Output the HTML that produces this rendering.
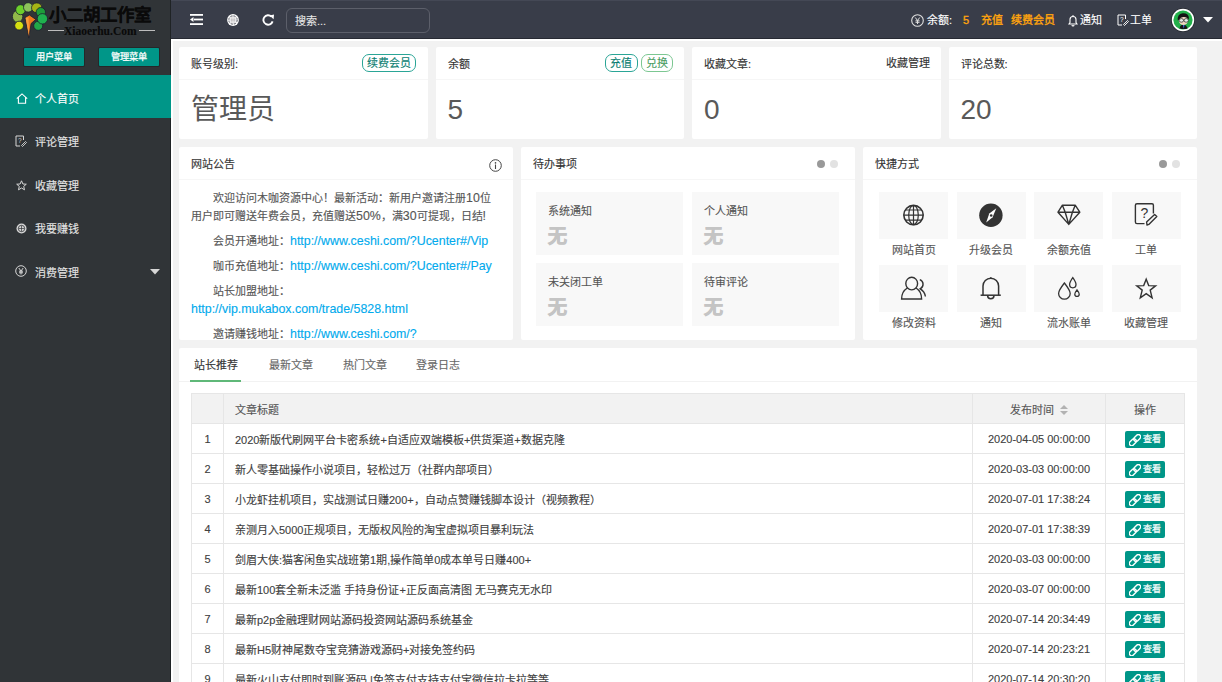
<!DOCTYPE html>
<html lang="zh-CN"><head><meta charset="utf-8">
<style>
*{box-sizing:border-box;margin:0;padding:0}
html,body{width:1222px;height:682px;overflow:hidden}
body{position:relative;background:#f2f2f2;font-family:"Liberation Sans",sans-serif;color:#333;font-size:11px;-webkit-text-stroke:0.12px}
.abs{position:absolute}
#side{left:0;top:0;width:171px;height:682px;background:#303437}
#head{left:171px;top:0;width:1051px;height:39px;background:#393d49}
#wl{left:171px;top:39px;width:2px;height:643px;background:#fff}
#wt{left:171px;top:39px;width:1051px;height:2px;background:#fff}
.card{position:absolute;background:#fff;border-radius:2px;overflow:hidden}
.ch{position:absolute;left:0;right:0;top:0;height:33px;border-bottom:1px solid #f6f6f6;font-size:11px;color:#333;line-height:35px;padding-left:12px}
.t{position:absolute;white-space:nowrap;line-height:1}
.sbtn{position:absolute;top:48px;width:60px;height:18px;background:#009688;color:#fff;font-size:9.2px;line-height:18px;text-align:center;border-radius:1px;-webkit-text-stroke:0.25px #fff;box-shadow:0 0 0 1px #24282a}
.mi{position:absolute;left:0;width:171px;height:44px;color:#e4e4e4;font-size:11px}
.mi span{position:absolute;left:35px;top:1.5px;line-height:44px}
.mi svg{position:absolute;left:15px;top:16px}
.badge{position:absolute;height:17.5px;border:1px solid #2aa596;color:#087c70;border-radius:7px;font-size:11px;line-height:16.5px;padding:0 4px}
.big{position:absolute;left:12px;top:49px;font-size:28px;line-height:28px;color:#595959;-webkit-text-stroke:0}
.note p{margin:0 0 7px 0;line-height:18px;font-size:11px;color:#555;text-indent:2em;white-space:nowrap}
.note a{color:#01aaed;text-decoration:none}
.note .L{font-size:12.4px;font-weight:normal}
.note span{display:inline-block}
.todo{position:absolute;width:147px;height:63px;background:#f8f8f8}
.todo .a{position:absolute;left:12px;top:12.5px;font-size:11px;color:#555;line-height:12px}
.todo .b{position:absolute;left:12px;top:35px;font-size:19px;font-weight:bold;color:#c4c4c4;line-height:19px;-webkit-text-stroke:0.7px #c4c4c4}
.tile{position:absolute;width:69px;height:47px;background:#f8f8f8}
.tile svg{position:absolute;left:50%;top:50%;transform:translate(-50%,-50%)}
.tl{position:absolute;width:69px;text-align:center;font-size:11px;color:#555;line-height:12px}
.dot{position:absolute;width:8px;height:8px;border-radius:50%}
table{position:absolute;left:191px;top:393px;width:993px;border-collapse:collapse;table-layout:fixed;font-size:11px;color:#404040}
td,th{border:1px solid #e6e6e6;height:30px;padding:0 11px;white-space:nowrap;overflow:hidden;font-weight:normal}
th{background:#f2f2f2;color:#555}
td.c,th.c{text-align:center;padding:0}
.vbtn{display:inline-block;width:40px;height:17px;background:#009688;color:#fff;font-size:9px;line-height:17px;border-radius:2px;vertical-align:middle;position:relative;top:1px;text-align:left}
.vbtn i{font-style:normal;position:absolute;left:17.5px;top:0;-webkit-text-stroke:0.25px #fff}
</style></head><body>
<div id="side" class="abs"></div>
<div id="head" class="abs"></div>
<div id="wl" class="abs"></div>
<div id="wt" class="abs"></div>
<div class="abs" style="left:170px;top:0;width:1px;height:682px;background:#1f2325"></div>
<div class="abs" style="left:171px;top:0;width:1051px;height:1px;background:#444855"></div>
<div class="abs" style="left:171px;top:38px;width:1051px;height:1px;background:#272a33"></div>

<!-- LOGO -->
<svg class="abs" style="left:10px;top:0px" width="40" height="40" viewBox="10 0 40 40">
 <g stroke="#1c2030" stroke-width="0.8">
 <ellipse cx="17.6" cy="16.4" rx="5.2" ry="6" fill="#92b94a"/>
 <circle cx="19.1" cy="25.6" r="4.4" fill="#d6e010"/>
 <ellipse cx="20.5" cy="9.7" rx="4.8" ry="5" fill="#6ccf2c"/>
 <circle cx="28.2" cy="7.4" r="4.7" fill="#8dc25a"/>
 <ellipse cx="36.7" cy="7.8" rx="5.2" ry="4.9" fill="#a5b414"/>
 <circle cx="38.2" cy="25.8" r="4.5" fill="#22a848"/>
 <circle cx="40.8" cy="12.2" r="4.7" fill="#1e9e3a"/>
 <circle cx="42.4" cy="18.8" r="5.2" fill="#1fb24e"/>
 <path d="M25 17.6 L29.4 15 L35.8 19.4 L31.1 23.5 L28.8 38.1 Z" fill="#f07a1c"/>
 </g>
 <path d="M25.6 18 L28.5 17 L29.2 36 Z" fill="#f6a040"/>
</svg>
<div class="t" style="left:49px;top:6.5px;font-size:17.5px;font-weight:bold;color:#0a0a0a;-webkit-text-stroke:0.15px #0a0a0a">小二胡工作室</div>
<div class="abs" style="left:48px;top:30px;width:16px;height:1px;background:#bdbdbd"></div>
<div class="abs" style="left:139px;top:30px;width:16px;height:1px;background:#bdbdbd"></div>
<div class="t" style="left:64px;top:26px;font-family:'Liberation Serif',serif;font-size:11.5px;color:#0a0a0a;font-weight:bold">Xiaoerhu.Com</div>

<div class="sbtn" style="left:24px">用户菜单</div>
<div class="sbtn" style="left:99px">管理菜单</div>

<div class="mi" style="top:75px;height:43px;background:#009688;color:#fff"><svg width="12" height="11" viewBox="0 0 12 11" style="left:15.5px;top:18px"><path d="M0.8 5.6 L6 0.9 L11.2 5.6 M2.4 4.4 V10.2 H9.6 V4.4" fill="none" stroke="#fff" stroke-width="1.1"/></svg><span style="line-height:43px;top:2.5px">个人首页</span></div>
<div class="mi" style="top:118px"><svg width="12" height="12" viewBox="0 0 12 12" style="top:17px"><path d="M8.5 1 H1 V11 H5 M8.5 1 V5" fill="none" stroke="#d6d6d6" stroke-width="1"/><text x="3" y="8" font-size="6.5" fill="#d6d6d6" font-family="Liberation Sans">?</text><path d="M6.5 10.5 L10.5 6.5 L11.5 7.5 L7.5 11.5 Z" fill="none" stroke="#d6d6d6" stroke-width="0.9"/></svg><span>评论管理</span></div>
<div class="mi" style="top:162px"><svg width="11" height="11" viewBox="0 0 11 11" style="left:16px;top:18px"><path d="M5.5 0.8 L6.9 4 L10.3 4.2 L7.7 6.4 L8.5 9.8 L5.5 8 L2.5 9.8 L3.3 6.4 L0.7 4.2 L4.1 4 Z" fill="none" stroke="#d6d6d6" stroke-width="1"/></svg><span>收藏管理</span></div>
<div class="mi" style="top:205px"><svg width="11" height="11" viewBox="0 0 11 11" style="left:16px;top:18px"><circle cx="5.5" cy="5.5" r="5" fill="#d6d6d6"/><circle cx="5.5" cy="5.5" r="3.2" fill="none" stroke="#303437" stroke-width="0.8"/><path d="M2.5 5.5 H8.5 M5.5 2.5 V8.5" stroke="#303437" stroke-width="0.7"/></svg><span>我要赚钱</span></div>
<div class="mi" style="top:249px"><svg width="12" height="12" viewBox="0 0 12 12" style="left:15px;top:16px"><circle cx="6" cy="6" r="5.3" fill="none" stroke="#d6d6d6" stroke-width="1"/><path d="M3.8 3 L6 6 L8.2 3 M6 6 V9.5 M4 6.2 H8 M4 7.8 H8" fill="none" stroke="#d6d6d6" stroke-width="1"/></svg><span>消费管理</span>
 <svg width="10" height="6" viewBox="0 0 10 6" style="left:150px;top:20px"><path d="M0 0 H10 L5 5.5 Z" fill="#d6d6d6"/></svg></div>

<!-- HEADER -->
<svg class="abs" style="left:190px;top:14px" width="13" height="11" viewBox="0 0 13 11"><rect x="0" y="0" width="13" height="1.8" fill="#fff"/><rect x="0" y="9.2" width="13" height="1.8" fill="#fff"/><rect x="4" y="4.6" width="9" height="1.8" fill="#fff"/><path d="M0 5.5 L3.5 3 V8 Z" fill="#fff"/></svg>
<svg class="abs" style="left:226.8px;top:13.5px" width="12" height="12" viewBox="0 0 12 12"><circle cx="6" cy="6" r="5.9" fill="#fff"/><circle cx="6" cy="6" r="4.2" fill="#e6e6ea" stroke="#2e313b" stroke-width="0.8" stroke-dasharray="2.2 1.1"/><path d="M4.9 2.6 V9.4 M7.1 2.6 V9.4" stroke="#a9a4a2" stroke-width="0.8"/><path d="M2.4 3.9 H9.6 M2.4 8.1 H9.6" stroke="#fff" stroke-width="0.8"/></svg>
<svg class="abs" style="left:262px;top:14px" width="13" height="12" viewBox="0 0 13 12"><path d="M10.6 7.4 A4.7 4.7 0 1 1 9.4 2.6" fill="none" stroke="#fff" stroke-width="1.9"/><path d="M7.6 1.4 L12 0.6 L11.6 5.2 Z" fill="#fff"/></svg>
<div class="abs" style="left:286px;top:8px;width:144px;height:25px;border:1px solid #5c5f6a;border-radius:6px"></div>
<div class="t" style="left:295px;top:15.5px;font-size:11px;color:#e6e6e6">搜索...</div>

<svg class="abs" style="left:910.5px;top:14px" width="13" height="13" viewBox="0 0 13 13"><circle cx="6.5" cy="6.5" r="5.8" fill="none" stroke="#e0e0e0" stroke-width="1.1"/><path d="M4.3 3.5 L6.5 6.5 L8.7 3.5 M6.5 6.5 V10 M4.5 6.8 H8.5 M4.5 8.3 H8.5" fill="none" stroke="#e0e0e0" stroke-width="1"/></svg>
<div class="t" style="left:927px;top:14.5px;font-size:11px;color:#fff">余额:</div>
<div class="t" style="left:963px;top:14.5px;font-size:11px;color:#ffa40d;-webkit-text-stroke:0.35px #ffa40d">5</div>
<div class="t" style="left:981px;top:14.5px;font-size:11px;color:#ffa40d;-webkit-text-stroke:0.35px #ffa40d">充值</div>
<div class="t" style="left:1011px;top:14.5px;font-size:11px;color:#ffa40d;-webkit-text-stroke:0.35px #ffa40d">续费会员</div>
<svg class="abs" style="left:1067.5px;top:13.5px" width="10" height="13" viewBox="0 0 10 13"><path d="M1 10 H9 L8 8.5 V5.5 A3 3 0 0 0 2 5.5 V8.5 Z M4 11 A1 1 0 0 0 6 11" fill="none" stroke="#fff" stroke-width="1.1"/><path d="M5 1 V2.3" stroke="#fff" stroke-width="1"/></svg>
<div class="t" style="left:1080px;top:14.5px;font-size:11px;color:#fff">通知</div>
<svg class="abs" style="left:1117px;top:14px" width="12" height="12" viewBox="0 0 12 12"><path d="M8.5 1 H1 V11 H5 M8.5 1 V5" fill="none" stroke="#fff" stroke-width="1"/><text x="3" y="8" font-size="6.5" fill="#fff" font-family="Liberation Sans">?</text><path d="M6.5 10.5 L10.5 6.5 L11.5 7.5 L7.5 11.5 Z" fill="none" stroke="#fff" stroke-width="0.9"/></svg>
<div class="t" style="left:1130px;top:14.5px;font-size:11px;color:#fff">工单</div>
<svg class="abs" style="left:1171px;top:8px" width="24" height="24" viewBox="0 0 24 24"><circle cx="12" cy="12" r="12" fill="#22252c"/><circle cx="12" cy="12" r="11.2" fill="#fff"/><circle cx="12" cy="12" r="9.6" fill="#23b04a"/><path d="M8.6 20.2 Q9.5 16.8 12.2 16.6 Q15.2 16.8 16.6 20.4 Q12.5 21.8 8.6 20.2 Z" fill="#151515"/><path d="M11.8 17 L12.8 20.8 L13.5 17 Z" fill="#3b6ed8"/><ellipse cx="12.4" cy="12.6" rx="4.6" ry="4.4" fill="#efd6bf"/><path d="M6.8 12.5 Q6 6 11.5 5.2 Q17.8 4.8 18 10.5 L17.2 11 Q15.5 8.6 12.5 9 Q9.5 8.8 8.2 11.5 Z" fill="#141414"/><ellipse cx="10.4" cy="12.4" rx="2.2" ry="1.8" fill="#e8efe8" stroke="#222" stroke-width="0.7"/><ellipse cx="15.2" cy="12.4" rx="2.2" ry="1.8" fill="#e8efe8" stroke="#222" stroke-width="0.7"/></svg>
<svg class="abs" style="left:1203px;top:17px" width="10" height="6" viewBox="0 0 10 6"><path d="M0 0 H10 L5 5.5 Z" fill="#fff"/></svg>

<!-- row 1 cards -->
<div class="card" style="left:179px;top:47px;width:248.5px;height:92px"><div class="ch">账号级别:</div>
 <div class="badge" style="left:183px;top:7px">续费会员</div><div class="big">管理员</div></div>
<div class="card" style="left:435.5px;top:47px;width:248.5px;height:92px"><div class="ch">余额</div>
 <div class="badge" style="left:169.5px;top:7px;width:32.5px">充值</div><div class="badge" style="left:205.5px;top:7px;width:32px;border-color:#7cc792;color:#4b9d63">兑换</div><div class="big">5</div></div>
<div class="card" style="left:692px;top:47px;width:248.5px;height:92px"><div class="ch">收藏文章:</div>
 <div class="t" style="right:11px;top:11px;font-size:11px;color:#333">收藏管理</div><div class="big">0</div></div>
<div class="card" style="left:948.5px;top:47px;width:248.5px;height:92px"><div class="ch">评论总数:</div><div class="big">20</div></div>

<!-- row 2 -->
<div class="card" style="left:179px;top:147px;width:334px;height:193px"><div class="ch">网站公告</div>
 <svg class="abs" style="left:310px;top:11.5px" width="13" height="13" viewBox="0 0 13 13"><circle cx="6.5" cy="6.5" r="5.8" fill="none" stroke="#444" stroke-width="1"/><circle cx="6.5" cy="3.9" r="0.8" fill="#444"/><path d="M6.5 5.6 V10" stroke="#444" stroke-width="1.1"/></svg>
 <div class="note abs" style="left:12px;top:41.5px;width:320px">
  <p>欢迎访问木咖资源中心！最新活动：新用户邀请注册<b class="L">10</b>位<br><span style="margin-left:-22px">用户即可赠送年费会员，充值赠送<b class="L">50%</b>，满<b class="L">30</b>可提现，日结<b class="L">!</b></span></p>
  <p>会员开通地址：<a class="L">http://www.ceshi.com/?Ucenter#/Vip</a></p>
  <p>咖币充值地址：<a class="L">http://www.ceshi.com/?Ucenter#/Pay</a></p>
  <p>站长加盟地址：<br><a class="L" style="margin-left:-22px;display:inline-block">http://vip.mukabox.com/trade/5828.html</a></p>
  <p>邀请赚钱地址：<a class="L">http://www.ceshi.com/?</a></p>
 </div>
</div>
<div class="card" style="left:521px;top:147px;width:334px;height:193px"><div class="ch">待办事项</div>
 <div class="dot" style="left:296px;top:13px;background:#999"></div><div class="dot" style="left:309px;top:13px;background:#e2e2e2"></div>
 <div class="todo" style="left:15px;top:45px"><div class="a">系统通知</div><div class="b">无</div></div>
 <div class="todo" style="left:171px;top:45px"><div class="a">个人通知</div><div class="b">无</div></div>
 <div class="todo" style="left:15px;top:116px"><div class="a">未关闭工单</div><div class="b">无</div></div>
 <div class="todo" style="left:171px;top:116px"><div class="a">待审评论</div><div class="b">无</div></div>
</div>
<div class="card" style="left:863px;top:147px;width:334px;height:193px"><div class="ch">快捷方式</div>
 <div class="dot" style="left:296px;top:13px;background:#999"></div><div class="dot" style="left:309px;top:13px;background:#e2e2e2"></div>
 <div class="tile" style="left:16px;top:45px"></div><div class="tl" style="left:16px;top:97px">网站首页</div>
 <div class="tile" style="left:93.5px;top:45px"></div><div class="tl" style="left:93.5px;top:97px">升级会员</div>
 <div class="tile" style="left:171px;top:45px"></div><div class="tl" style="left:171px;top:97px">余额充值</div>
 <div class="tile" style="left:248.5px;top:45px"></div><div class="tl" style="left:248.5px;top:97px">工单</div>
 <div class="tile" style="left:16px;top:118px"></div><div class="tl" style="left:16px;top:170px">修改资料</div>
 <div class="tile" style="left:93.5px;top:118px"></div><div class="tl" style="left:93.5px;top:170px">通知</div>
 <div class="tile" style="left:171px;top:118px"></div><div class="tl" style="left:171px;top:170px">流水账单</div>
 <div class="tile" style="left:248.5px;top:118px"></div><div class="tl" style="left:248.5px;top:170px">收藏管理</div>
</div>

<!-- tab card -->
<div class="card" style="left:179px;top:348px;width:1018px;height:400px">
 <div class="abs" style="left:0;right:0;top:33px;height:1px;background:#f2f2f2"></div>
 <div class="abs" style="left:11px;top:32px;width:51px;height:2px;background:#5fb878"></div>
 <div class="t" style="left:15.2px;top:11.5px;font-size:11px;color:#333">站长推荐</div>
 <div class="t" style="left:90.2px;top:11.5px;font-size:11px;color:#666">最新文章</div>
 <div class="t" style="left:164.2px;top:11.5px;font-size:11px;color:#666">热门文章</div>
 <div class="t" style="left:237.2px;top:11.5px;font-size:11px;color:#666">登录日志</div>
</div>

<table>
<colgroup><col style="width:32px"><col style="width:749px"><col style="width:133px"><col style="width:79px"></colgroup>
<tr><th></th><th style="text-align:left">文章标题</th><th class="c">发布时间 <svg width="8" height="10" viewBox="0 0 8 10" style="vertical-align:-1px;margin-left:3px"><path d="M0 4 L4 0 L8 4Z M0 6 L4 10 L8 6Z" fill="#b2b2b2"/></svg></th><th class="c">操作</th></tr>
<tr><td class="c">1</td><td>2020新版代刷网平台卡密系统+自适应双端模板+供货渠道+数据克隆</td><td class="c">2020-04-05 00:00:00</td><td class="c"><span class="vbtn"><svg width="12" height="12" viewBox="0 0 12 12" style="position:absolute;left:3.5px;top:2.5px"><g fill="none" stroke="#fff" stroke-width="1.4"><rect x="-2.3" y="-3.9" width="4.6" height="7.8" rx="2.3" transform="translate(8.2 4.0) rotate(45)"/><rect x="-2.3" y="-3.9" width="4.6" height="7.8" rx="2.3" transform="translate(3.8 8.3) rotate(45)"/></g></svg><i>查看</i></span></td></tr>
<tr><td class="c">2</td><td>新人零基础操作小说项目，轻松过万（社群内部项目）</td><td class="c">2020-03-03 00:00:00</td><td class="c"><span class="vbtn"><svg width="12" height="12" viewBox="0 0 12 12" style="position:absolute;left:3.5px;top:2.5px"><g fill="none" stroke="#fff" stroke-width="1.4"><rect x="-2.3" y="-3.9" width="4.6" height="7.8" rx="2.3" transform="translate(8.2 4.0) rotate(45)"/><rect x="-2.3" y="-3.9" width="4.6" height="7.8" rx="2.3" transform="translate(3.8 8.3) rotate(45)"/></g></svg><i>查看</i></span></td></tr>
<tr><td class="c">3</td><td>小龙虾挂机项目，实战测试日赚200+，自动点赞赚钱脚本设计（视频教程）</td><td class="c">2020-07-01 17:38:24</td><td class="c"><span class="vbtn"><svg width="12" height="12" viewBox="0 0 12 12" style="position:absolute;left:3.5px;top:2.5px"><g fill="none" stroke="#fff" stroke-width="1.4"><rect x="-2.3" y="-3.9" width="4.6" height="7.8" rx="2.3" transform="translate(8.2 4.0) rotate(45)"/><rect x="-2.3" y="-3.9" width="4.6" height="7.8" rx="2.3" transform="translate(3.8 8.3) rotate(45)"/></g></svg><i>查看</i></span></td></tr>
<tr><td class="c">4</td><td>亲测月入5000正规项目，无版权风险的淘宝虚拟项目暴利玩法</td><td class="c">2020-07-01 17:38:39</td><td class="c"><span class="vbtn"><svg width="12" height="12" viewBox="0 0 12 12" style="position:absolute;left:3.5px;top:2.5px"><g fill="none" stroke="#fff" stroke-width="1.4"><rect x="-2.3" y="-3.9" width="4.6" height="7.8" rx="2.3" transform="translate(8.2 4.0) rotate(45)"/><rect x="-2.3" y="-3.9" width="4.6" height="7.8" rx="2.3" transform="translate(3.8 8.3) rotate(45)"/></g></svg><i>查看</i></span></td></tr>
<tr><td class="c">5</td><td>剑眉大侠:猫客闲鱼实战班第1期,操作简单0成本单号日赚400+</td><td class="c">2020-03-03 00:00:00</td><td class="c"><span class="vbtn"><svg width="12" height="12" viewBox="0 0 12 12" style="position:absolute;left:3.5px;top:2.5px"><g fill="none" stroke="#fff" stroke-width="1.4"><rect x="-2.3" y="-3.9" width="4.6" height="7.8" rx="2.3" transform="translate(8.2 4.0) rotate(45)"/><rect x="-2.3" y="-3.9" width="4.6" height="7.8" rx="2.3" transform="translate(3.8 8.3) rotate(45)"/></g></svg><i>查看</i></span></td></tr>
<tr><td class="c">6</td><td>最新100套全新未泛滥 手持身份证+正反面高清图 无马赛克无水印</td><td class="c">2020-03-07 00:00:00</td><td class="c"><span class="vbtn"><svg width="12" height="12" viewBox="0 0 12 12" style="position:absolute;left:3.5px;top:2.5px"><g fill="none" stroke="#fff" stroke-width="1.4"><rect x="-2.3" y="-3.9" width="4.6" height="7.8" rx="2.3" transform="translate(8.2 4.0) rotate(45)"/><rect x="-2.3" y="-3.9" width="4.6" height="7.8" rx="2.3" transform="translate(3.8 8.3) rotate(45)"/></g></svg><i>查看</i></span></td></tr>
<tr><td class="c">7</td><td>最新p2p金融理财网站源码投资网站源码系统基金</td><td class="c">2020-07-14 20:34:49</td><td class="c"><span class="vbtn"><svg width="12" height="12" viewBox="0 0 12 12" style="position:absolute;left:3.5px;top:2.5px"><g fill="none" stroke="#fff" stroke-width="1.4"><rect x="-2.3" y="-3.9" width="4.6" height="7.8" rx="2.3" transform="translate(8.2 4.0) rotate(45)"/><rect x="-2.3" y="-3.9" width="4.6" height="7.8" rx="2.3" transform="translate(3.8 8.3) rotate(45)"/></g></svg><i>查看</i></span></td></tr>
<tr><td class="c">8</td><td>最新H5财神尾数夺宝竞猜游戏源码+对接免签约码</td><td class="c">2020-07-14 20:23:21</td><td class="c"><span class="vbtn"><svg width="12" height="12" viewBox="0 0 12 12" style="position:absolute;left:3.5px;top:2.5px"><g fill="none" stroke="#fff" stroke-width="1.4"><rect x="-2.3" y="-3.9" width="4.6" height="7.8" rx="2.3" transform="translate(8.2 4.0) rotate(45)"/><rect x="-2.3" y="-3.9" width="4.6" height="7.8" rx="2.3" transform="translate(3.8 8.3) rotate(45)"/></g></svg><i>查看</i></span></td></tr>
<tr><td class="c">9</td><td>最新火山支付即时到账源码 |免签支付支持支付宝微信拉卡拉等等</td><td class="c">2020-07-14 20:30:20</td><td class="c"><span class="vbtn"><svg width="12" height="12" viewBox="0 0 12 12" style="position:absolute;left:3.5px;top:2.5px"><g fill="none" stroke="#fff" stroke-width="1.4"><rect x="-2.3" y="-3.9" width="4.6" height="7.8" rx="2.3" transform="translate(8.2 4.0) rotate(45)"/><rect x="-2.3" y="-3.9" width="4.6" height="7.8" rx="2.3" transform="translate(3.8 8.3) rotate(45)"/></g></svg><i>查看</i></span></td></tr>
</table>
<svg class="abs" style="left:0;top:0" width="1222" height="682" viewBox="0 0 1222 682">
 <g fill="none" stroke="#333" stroke-width="1.2">
  <circle cx="913.5" cy="215.1" r="9.7" stroke-width="1.6"/>
  <ellipse cx="913.5" cy="215.1" rx="4.8" ry="9.6"/>
  <path d="M913.5 205.5 V224.7 M904 215.1 H923 M905.5 210 H921.5 M905.5 220.2 H921.5"/>
 </g>
 <circle cx="990.9" cy="215.3" r="11.7" fill="#333"/>
 <path d="M996.3 208.2 L992.6 217.2 L986.2 222.6 L989.3 213.4 Z" fill="#fff"/>
 <circle cx="991.2" cy="215.5" r="1.3" fill="#333"/>
 <g fill="none" stroke="#333" stroke-width="1.4" stroke-linejoin="round">
  <path d="M1058 212.2 L1062.4 205.2 H1075.2 L1079.8 212.2 L1068.8 224.4 Z M1058 212.2 H1079.8 M1062.4 205.2 L1065.2 212.2 L1068.8 224.4 M1075.2 205.2 L1072.4 212.2 L1068.8 224.4"/>
 </g>
 <g fill="none" stroke="#333" stroke-width="1.4" stroke-linejoin="round">
  <path d="M1144.5 223.6 H1137 Q1135.4 223.6 1135.4 222 V205.2 Q1135.4 203.8 1137 203.8 H1152 Q1153.4 203.8 1153.4 205.2 V213.5"/>
  <path d="M1147 225 L1146.6 222 L1154.6 214.4 L1156.8 216.6 L1148.8 224.4 Z"/>
 </g>
 <text x="1144.3" y="218.3" font-family="Liberation Sans" font-size="14" fill="#333" text-anchor="middle">?</text>
 <g fill="none" stroke="#333" stroke-width="1.4">
  <ellipse cx="911.7" cy="283.6" rx="5.9" ry="6.3"/>
  <path d="M907.3 288 Q901.6 291.5 901.6 299 H921.6 Q921.6 291.5 916.1 288"/>
  <path d="M919.8 279.6 A5 5 0 0 1 920.2 288.8 Q924.8 291.5 925.4 296.5"/>
 </g>
 <g fill="none" stroke="#333" stroke-width="1.5">
  <path d="M983 295 V286 A7.8 7.8 0 0 1 998.6 286 V295"/>
  <path d="M980.6 295.2 H1000.8"/>
  <path d="M987.6 295.5 A3.2 3.2 0 0 0 994 295.5"/>
  <path d="M990.8 277.2 V278.5"/>
 </g>
 <g fill="none" stroke="#333" stroke-width="1.3">
  <path d="M1064.4 283 Q1058.6 290.5 1058.6 293.4 A5.8 5.8 0 0 0 1070.2 293.4 Q1070.2 290.5 1064.4 283 Z"/>
  <path d="M1072.8 277.6 Q1069.6 282 1069.6 284.6 A3.2 3.2 0 0 0 1076 284.6 Q1076 282 1072.8 277.6 Z"/>
  <path d="M1077 289.8 Q1074.8 292.6 1074.8 294.2 A2.2 2.2 0 0 0 1079.2 294.2 Q1079.2 292.6 1077 289.8 Z"/>
 </g>
 <path d="M1146.2 279.2 L1148.7 285.6 L1155.6 285.9 L1150.2 290.1 L1152.1 297.8 L1146.2 293.6 L1140.3 297.8 L1142.2 290.1 L1136.8 285.9 L1143.7 285.6 Z" fill="none" stroke="#333" stroke-width="1.4" stroke-linejoin="miter"/>
</svg>
</body></html>
